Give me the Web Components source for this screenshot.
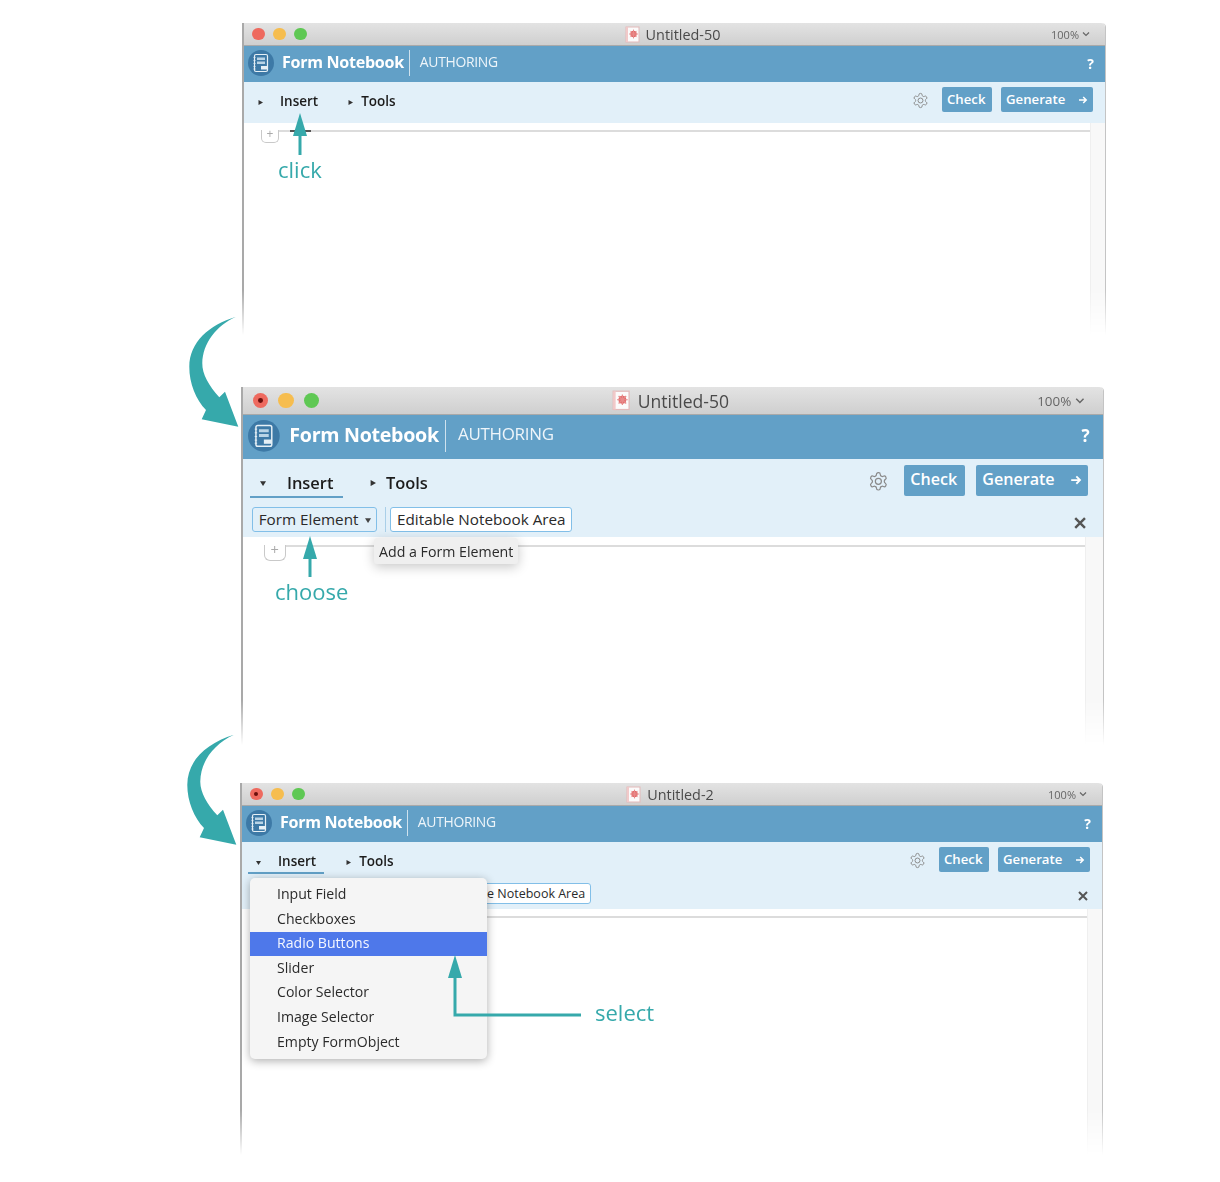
<!DOCTYPE html>
<html>
<head>
<meta charset="utf-8">
<title>Form Notebook</title>
<style>
  html, body { margin: 0; background: #fff; }
  #w1 { --s: 1; --row1: 41px; --h: 312px; margin-left: 242px; width: 864px; }
  #w2 { --s: 1.22; --row1: 43px; --row2: 35px; --h: 358px; margin: 52px 0 0 241px; width: 863px; }
  #w3 { --s: 1; --row1: 35px; --row2: 32px; --h: 372px; margin: 38px 0 0 240px; width: 863px; }
</style>
</head>
<body>
<doc-canvas>
  <form-window id="w1" doc-title="Untitled-50" cursor></form-window>

  <form-window id="w2" doc-title="Untitled-50" open-tab expanded>
    <form-chip slot="row" menu>Form Element</form-chip>
    <chip-sep slot="row"></chip-sep>
    <form-chip slot="row" box>Editable Notebook Area</form-chip>
    <hover-tip slot="over">Add a Form Element</hover-tip>
  </form-window>

  <form-window id="w3" doc-title="Untitled-2" open-tab expanded>
    <form-chip slot="row" box style="margin-left:192px">Editable Notebook Area</form-chip>
    <popup-menu slot="over">
      <menu-row>Input Field</menu-row>
      <menu-row>Checkboxes</menu-row>
      <menu-row selected>Radio Buttons</menu-row>
      <menu-row>Slider</menu-row>
      <menu-row>Color Selector</menu-row>
      <menu-row>Image Selector</menu-row>
      <menu-row>Empty FormObject</menu-row>
    </popup-menu>
  </form-window>

  <swoosh-arrow slot="over" x="185" y="312"></swoosh-arrow>
  <swoosh-arrow slot="over" x="183" y="729.5"></swoosh-arrow>
  <pointer-note slot="over" x="300" tip="113" base="155" label="click" lx="278" ly="153"></pointer-note>
  <pointer-note slot="over" x="310" tip="536" base="577" label="choose" lx="275" ly="575"></pointer-note>
  <pointer-note slot="over" x="455" tip="955" base="1015" elbow="581" label="select" lx="595" ly="996"></pointer-note>
</doc-canvas>

<script>
const S = n => `calc(var(--s, 1) * ${n}px)`;

class DocCanvas extends HTMLElement {
  constructor() {
    super();
    this.attachShadow({ mode: 'open' });
    this.shadowRoot.innerHTML = `
      <style>
        :host { display: flex; flex-direction: column; align-items: flex-start; position: relative;
          width: 1220px; height: 1182px; padding-top: 23px; box-sizing: border-box; overflow: hidden; }
      </style>
      <slot></slot><slot name="over"></slot>`;
  }
}

class FormWindow extends HTMLElement {
  constructor() {
    super();
    this.attachShadow({ mode: 'open' });
  }

  connectedCallback() {
    const title = this.getAttribute('doc-title') || '';
    const openTab = this.hasAttribute('open-tab');
    const cursor = this.hasAttribute('cursor');

    this.shadowRoot.innerHTML = `
      <style>
        :host { display: flex; flex-direction: column; height: var(--h); box-sizing: border-box; position: relative;
          border-left: 2px solid #a9a9a9; border-right: 1px solid #c4c4c4; border-top-right-radius: 4px;
          font-family: "Open Sans", "Liberation Sans", sans-serif; color: #222; filter: blur(0.35px);
          -webkit-mask-image: linear-gradient(#000 calc(100% - 45px), transparent);
          mask-image: linear-gradient(#000 calc(100% - 45px), transparent); }
        .title { flex: none; display: grid; grid-template-columns: 1fr auto 1fr; align-items: center;
          height: ${S(23)}; box-sizing: border-box; background: linear-gradient(#e3e3e3, #cfcfcf);
          border-bottom: 1px solid #a9a9a9; padding: 0 ${S(15)} 0 ${S(8)}; border-top-right-radius: 4px; }
        .lights { display: flex; gap: ${S(8.5)}; }
        .lights i { display: flex; align-items: center; justify-content: center;
          width: ${S(12.5)}; height: ${S(12.5)}; border-radius: 50%; }
        .lights b { width: ${S(4)}; height: ${S(4)}; border-radius: 50%; background: #6b0f0c; }
        .doc { display: flex; align-items: center; gap: ${S(6)}; margin-left: ${S(3)}; font-size: ${S(14.4)}; color: #4a4a4a; }
        .doc span { margin-top: ${S(1)}; }
        .doc svg { width: ${S(15)}; height: ${S(17)}; }
        .zoom { justify-self: end; display: flex; align-items: center; gap: ${S(3)}; font-size: ${S(11)}; color: #666; }
        .zoom svg { width: ${S(8)}; height: ${S(6)}; }
        .brand { flex: none; display: flex; align-items: center; height: ${S(36)}; box-sizing: border-box; background: #62a0c7;
          color: #fff; padding: 0 ${S(11)} ${S(2)} ${S(4)}; }
        .brand svg { width: ${S(26)}; height: ${S(26)}; margin-right: ${S(8)}; }
        .name { font-weight: 700; font-size: ${S(16.1)}; letter-spacing: -0.3px; margin-bottom: ${S(2)}; }
        .rule { width: 1px; height: ${S(26)}; background: #cfe2ee; margin: 0 ${S(10)} 0 ${S(5)}; }
        .mode { font-size: ${S(13.9)}; letter-spacing: -0.3px; color: #eef5fa; margin-bottom: ${S(4)}; }
        .help { margin-left: auto; font-weight: 700; font-size: ${S(14)}; }
        .tools { flex: none; background: #e2f0f9; }
        .row1 { display: flex; align-items: flex-start; height: var(--row1); box-sizing: border-box;
          padding: ${S(5)} ${S(12)} 0 ${S(6)}; }
        .tabs { display: flex; gap: ${S(14)}; }
        .acts { margin-left: auto; display: flex; align-items: center; }
        .acts svg.gear { width: ${S(17)}; height: ${S(17)}; margin: ${S(1)} ${S(13)} 0 0; }
        .btn { display: flex; align-items: center; height: ${S(25)}; box-sizing: border-box; background: #62a0c7;
          color: #fff; font-weight: 600; font-size: ${S(13.2)}; border-radius: 2px; padding: 0 ${S(5)} ${S(2)}; }
        .check { width: ${S(50)}; }
        .gen { width: ${S(92)}; margin-left: ${S(9)}; justify-content: space-between; }
        .gen svg { width: ${S(10)}; height: ${S(10)}; margin-top: ${S(2)}; }
        .row2 { display: none; align-items: center; height: var(--row2); box-sizing: border-box; padding: 0 ${S(14)} 0 ${S(7.5)}; }
        :host([expanded]) .row2 { display: flex; }
        .close { margin-left: auto; width: ${S(10)}; height: ${S(10)}; margin-top: ${S(6)}; }
        .body { flex: 1; display: flex; min-height: 0; }
        .page { flex: 1; display: flex; align-items: flex-start; padding-left: ${S(17)}; }
        .plus { flex: none; display: flex; justify-content: center; width: ${S(18)}; height: ${S(13)}; margin-top: ${S(7)};
          box-sizing: border-box; border: 1px solid #c9c9c9; border-top: none; border-radius: 0 0 ${S(5)} ${S(5)};
          color: #aaa; font-size: ${S(12)}; line-height: ${S(8)}; background: #fff; }
        .line { flex: 1; display: flex; height: 2px; margin-top: ${S(7)}; background: #dcdcdc; }
        .line i { display: none; width: 21px; height: 2px; margin-left: 11px; background: #555; }
        :host([cursor]) .line i { display: block; }
        .strip { flex: none; width: ${S(14)}; background: #f8f8f8; border-left: 1px solid #efefef; }
        ::slotted([slot="over"]) { position: absolute; }
      </style>
      <div class="title">
        <div class="lights">
          <i style="background:#ee6a5f"><b style="display:${this.id === 'w1' ? 'none' : 'block'}"></b></i>
          <i style="background:#f6bd4f"></i>
          <i style="background:#5fc854"></i>
        </div>
        <div class="doc">
          <svg viewBox="0 0 15 17"><rect x="1" y="1" width="13" height="15" fill="#fbfbfb" stroke="#e3b9b9"/><rect x="1" y="1" width="2" height="15" fill="#f1c9c9"/><circle cx="8.5" cy="8" r="3.2" fill="#e26a6a"/><path d="M8.5 3.6v8.8M4.1 8h8.8M5.4 4.9l6.2 6.2M11.6 4.9l-6.2 6.2" stroke="#e88a8a" stroke-width="1"/></svg>
          <span>${title}</span>
        </div>
        <div class="zoom"><span>100%</span><svg viewBox="0 0 8 6"><path d="M1 1.5l3 3 3-3" fill="none" stroke="#666" stroke-width="1.2"/></svg></div>
      </div>
      <div class="brand">
        <svg viewBox="0 0 26 26"><circle cx="13" cy="13" r="13" fill="#3d79a6"/><rect x="6.500" y="4.500" width="13" height="17" rx="1.500" fill="none" stroke="#e6f0f6" stroke-width="1.200"/><path d="M5.500 7.500h2M5.500 10.500h2M5.500 13.500h2M5.500 16.500h2M5.500 19h2" stroke="#e6f0f6" stroke-width=".8"/><path d="M9 7.500h8v2.500H9zM9 11.500h8V14H9z" fill="#b9d4e6"/><path d="M13 16h6.500v3.500H13z" fill="#e6f0f6"/></svg>
        <span class="name">Form Notebook</span><span class="rule"></span><span class="mode">AUTHORING</span>
        <span class="help">?</span>
      </div>
      <div class="tools">
        <div class="row1">
          <div class="tabs">
            <tool-tab gap="17" ${openTab ? 'open' : ''}>Insert</tool-tab>
            <tool-tab gap="8">Tools</tool-tab>
          </div>
          <div class="acts">
            <svg class="gear" viewBox="0 0 24 24" fill="none" stroke="#8a8a8a" stroke-width="1.4"><path d="M12.22 2h-.44a2 2 0 0 0-2 2v.18a2 2 0 0 1-1 1.73l-.43.25a2 2 0 0 1-2 0l-.15-.08a2 2 0 0 0-2.73.73l-.22.38a2 2 0 0 0 .73 2.73l.15.1a2 2 0 0 1 1 1.72v.51a2 2 0 0 1-1 1.74l-.15.09a2 2 0 0 0-.73 2.73l.22.38a2 2 0 0 0 2.73.73l.15-.08a2 2 0 0 1 2 0l.43.25a2 2 0 0 1 1 1.73V20a2 2 0 0 0 2 2h.44a2 2 0 0 0 2-2v-.18a2 2 0 0 1 1-1.73l.43-.25a2 2 0 0 1 2 0l.15.08a2 2 0 0 0 2.73-.73l.22-.39a2 2 0 0 0-.73-2.73l-.15-.08a2 2 0 0 1-1-1.74v-.5a2 2 0 0 1 1-1.74l.15-.09a2 2 0 0 0 .73-2.73l-.22-.38a2 2 0 0 0-2.73-.73l-.15.08a2 2 0 0 1-2 0l-.43-.25a2 2 0 0 1-1-1.73V4a2 2 0 0 0-2-2z"/><circle cx="12" cy="12" r="3.5"/></svg>
            <span class="btn check">Check</span>
            <span class="btn gen"><span>Generate</span><svg viewBox="0 0 10 10"><path d="M1 5h7M5.200 2l3 3-3 3" fill="none" stroke="#fff" stroke-width="1.500"/></svg></span>
          </div>
        </div>
        <div class="row2">
          <slot name="row"></slot>
          <svg class="close" viewBox="0 0 10 10"><path d="M1 1l8 8M9 1l-8 8" stroke="#555" stroke-width="2"/></svg>
        </div>
      </div>
      <div class="body">
        <div class="page">
          <div class="plus">+</div>
          <div class="line"><i></i></div>
        </div>
        <div class="strip"></div>
      </div>
      <slot name="over"></slot>`;
  }
}

class ToolTab extends HTMLElement {
  constructor() {
    super();
    this.attachShadow({ mode: 'open' });
  }

  connectedCallback() {
    const open = this.hasAttribute('open');
    const gap = this.getAttribute('gap') || 8;
    this.shadowRoot.innerHTML = `
      <style>
        :host { display: flex; align-items: center; height: ${S(22)}; padding: ${S(3)} ${S(8)} 0 ${S(8)};
          border-bottom: 2px solid ${open ? '#62a0c7' : 'transparent'};
          font-weight: 600; font-size: ${S(13.5)}; color: #1c1c1c; }
        svg { width: ${S(5)}; height: ${S(5)}; margin-right: ${S(gap)}; margin-top: ${S(2)}; }
      </style>
      <svg viewBox="0 0 5 5"><path d="${open ? 'M0 1h5L2.5 5z' : 'M0.5 0L5 2.5 0.5 5z'}" fill="#333"/></svg>
      <slot></slot>`;
  }
}

class FormChip extends HTMLElement {
  constructor() {
    super();
    this.attachShadow({ mode: 'open' });
  }

  connectedCallback() {
    const menu = this.hasAttribute('menu');
    this.shadowRoot.innerHTML = `
      <style>
        :host { display: flex; align-items: center; justify-content: center; gap: ${S(5)}; box-sizing: border-box;
          height: ${S(21)}; padding: 0 ${S(4.6)}; border: 1px solid #82bfe8; border-radius: 3px;
          font-size: ${S(12.5)}; color: #2a2a2a; white-space: nowrap; background: ${menu ? '#e2f0f9' : '#fff'}; }
        svg { width: ${S(5)}; height: ${S(5)}; margin-top: ${S(1)}; }
      </style>
      <slot></slot>
      ${menu ? '<svg viewBox="0 0 5 5"><path d="M0 1h5L2.5 5z" fill="#444"/></svg>' : ''}`;
  }
}

class ChipSep extends HTMLElement {
  constructor() {
    super();
    this.attachShadow({ mode: 'open' }).innerHTML = `
      <style>:host { display: block; width: 1px; height: ${S(21)}; margin: 0 ${S(4)} 0 ${S(6)}; background: #a9cfe8; }</style>`;
  }
}

class HoverTip extends HTMLElement {
  constructor() {
    super();
    this.attachShadow({ mode: 'open' }).innerHTML = `
      <style>
        :host { left: 131px; top: 151px; display: flex; align-items: center; height: 26px; box-sizing: border-box;
          padding: 0 5px; background: #efefef; border-radius: 3px; font-size: 14.2px; color: #2a2a2a;
          box-shadow: 0 3px 12px rgba(0,0,0,.22); white-space: nowrap; }
      </style>
      <slot></slot>`;
  }
}

class PopupMenu extends HTMLElement {
  constructor() {
    super();
    this.attachShadow({ mode: 'open' }).innerHTML = `
      <style>
        :host { left: 8px; top: 95px; width: 237px; height: 181px; box-sizing: border-box; padding-top: 4.5px;
          display: flex; flex-direction: column; background: #f5f5f5; border-radius: 5px;
          box-shadow: 0 2px 10px rgba(0,0,0,.32); }
      </style>
      <slot></slot>`;
  }
}

class MenuRow extends HTMLElement {
  constructor() {
    super();
    this.attachShadow({ mode: 'open' }).innerHTML = `
      <style>
        :host { display: flex; align-items: center; height: 24.6px; box-sizing: border-box; padding: 0 0 2.5px 27px; font-size: 14.1px; color: #2b2b2b; }
        :host([selected]) { background: #4e78ea; color: #f4f7ff; }
      </style>
      <slot></slot>`;
  }
}

class SwooshArrow extends HTMLElement {
  constructor() {
    super();
    this.attachShadow({ mode: 'open' });
  }

  connectedCallback() {
    this.shadowRoot.innerHTML = `
      <style>:host { position: absolute; left: ${this.getAttribute('x')}px; top: ${this.getAttribute('y')}px; line-height: 0; }</style>
      <svg width="60" height="120" viewBox="0 0 60 120">
        <path fill="#36a9ab" d="M51 4.7C24 13 4.5 30 4.3 54.7 4.2 71 11 88 21 98L16.7 107.300L53.300 114.700 40 79.700 34.300 85.300C24 74 17 62 17.300 51.300 17.700 31 31 14 51 4.700z"/>
      </svg>`;
  }
}

class PointerNote extends HTMLElement {
  constructor() {
    super();
    this.attachShadow({ mode: 'open' });
  }

  connectedCallback() {
    const a = n => this.getAttribute(n);
    const x = +a('x'), tip = +a('tip'), base = +a('base');
    const line = a('elbow') ? `M${x} ${tip + 15}V${base}H${a('elbow')}` : `M${x} ${tip + 15}V${base}`;
    this.shadowRoot.innerHTML = `
      <style>
        :host { position: absolute; inset: 0; pointer-events: none; }
        svg { position: absolute; left: 0; top: 0; }
        span { position: absolute; left: ${a('lx')}px; top: ${a('ly')}px; font: 22px/32px "Open Sans", "Liberation Sans", sans-serif; color: #36a9ab; }
      </style>
      <svg width="1220" height="1182" viewBox="0 0 1220 1182">
        <path d="${line}" fill="none" stroke="#36a9ab" stroke-width="3"/>
        <path d="M${x} ${tip}L${x + 7} ${tip + 23}H${x - 7}z" fill="#36a9ab"/>
      </svg>
      <span>${a('label')}</span>`;
  }
}

customElements.define('doc-canvas', DocCanvas);
customElements.define('form-window', FormWindow);
customElements.define('tool-tab', ToolTab);
customElements.define('form-chip', FormChip);
customElements.define('chip-sep', ChipSep);
customElements.define('hover-tip', HoverTip);
customElements.define('popup-menu', PopupMenu);
customElements.define('menu-row', MenuRow);
customElements.define('swoosh-arrow', SwooshArrow);
customElements.define('pointer-note', PointerNote);
</script>
</body>
</html>
